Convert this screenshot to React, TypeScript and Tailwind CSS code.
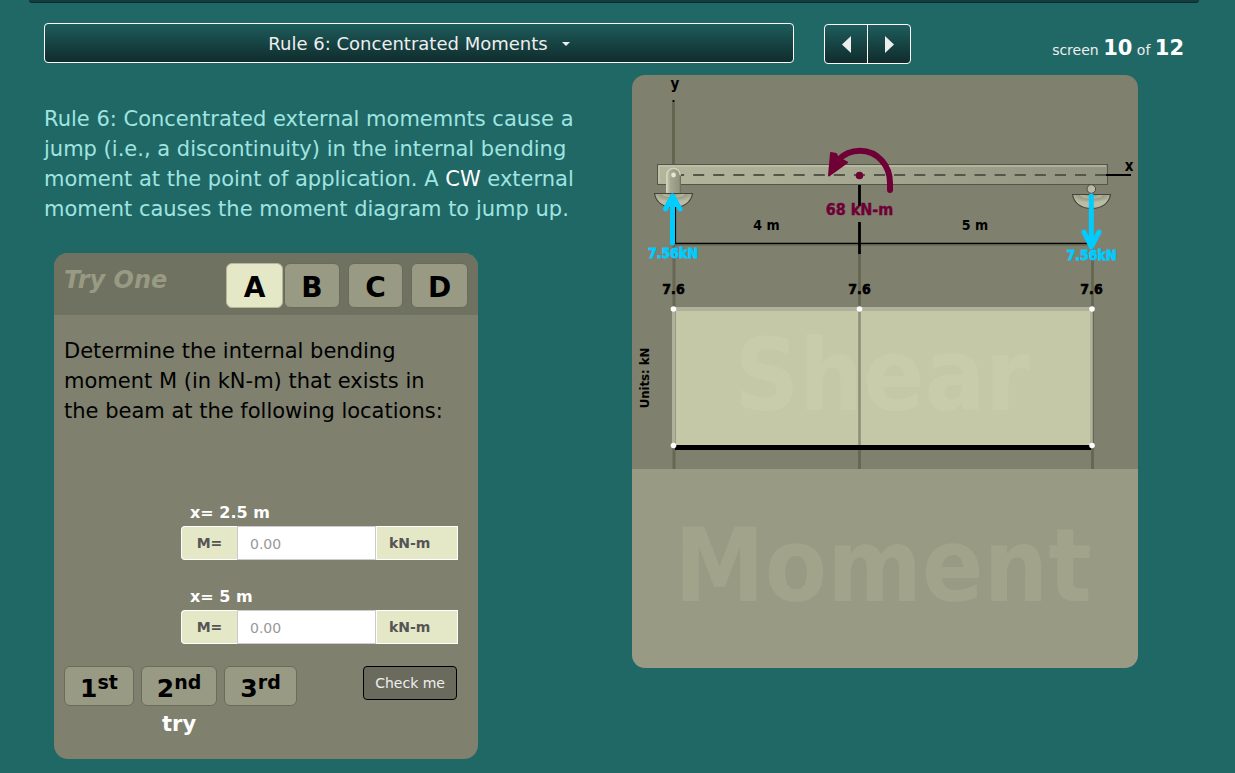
import React from "react";

const tabs = [
  { name: "A", style: "mr-px w-[57px] border-[#b4b79b] bg-[#e4e8c7]" },
  { name: "B", style: "mr-2 w-[56px] border-[#6a6c59] bg-[#989a83]" },
  { name: "C", style: "mr-2 w-[55px] border-[#6a6c59] bg-[#989a83]" },
  { name: "D", style: "w-[57px] border-[#6a6c59] bg-[#989a83]" },
];
const tries = [
  { digit: "1", suffix: "st" },
  { digit: "2", suffix: "nd" },
  { digit: "3", suffix: "rd" },
];
const locations = [
  { id: "m1", label: "x= 2.5 m" },
  { id: "m2", label: "x= 5 m" },
];

function Header() {
  return (
    <header className="flex items-start">
      <button
        type="button"
        aria-haspopup="menu"
        className="flex h-10 flex-1 items-center justify-center gap-[14px] rounded border border-white bg-linear-to-b from-[#1d5d5c] to-[#102c2d] pt-[2px] text-lg text-[#eeeeee]"
      >
        Rule 6: Concentrated Moments
        <svg width="8" height="4" viewBox="0 0 8 4" aria-hidden="true">
          <path d="M0 0h8L4 4z" fill="#eeeeee" />
        </svg>
      </button>
      <div className="ml-[30px] mt-px flex h-10 w-[87px] overflow-hidden rounded border border-white bg-linear-to-b from-[#1d5d5c] to-[#102c2d]">
        <button type="button" aria-label="Previous screen" className="flex flex-1 items-center justify-center border-r border-white">
          <svg width="9" height="17" viewBox="0 0 9 17" aria-hidden="true">
            <path d="M9 0v17L0 8.5z" fill="#eeeeee" />
          </svg>
        </button>
        <button type="button" aria-label="Next screen" className="flex flex-1 items-center justify-center">
          <svg width="9" height="17" viewBox="0 0 9 17" aria-hidden="true">
            <path d="M0 0v17l9-8.5z" fill="#eeeeee" />
          </svg>
        </button>
      </div>
      <p className="mt-[13px] w-[273px] text-right text-sm text-[#eeeeee]">
        screen <b className="text-[21px] leading-6 text-white">10</b> of <b className="text-[21px] leading-6 text-white">12</b>
      </p>
    </header>
  );
}

function TryOne() {
  return (
    <section className="ml-[10px] mt-[29px] w-[424px] overflow-hidden rounded-[14px] bg-[#7f806e] pb-[21px] text-black">
      <div className="flex h-[62px] items-start justify-between bg-[#6f7260] px-[10px] pt-[10px]">
        <h2 className="pt-[2px] text-2xl font-bold italic leading-[30px] text-[#989a83]">Try One</h2>
        <div className="flex">
          {tabs.map((t) => (
            <button key={t.name} type="button" className={"h-[45px] rounded-md border pt-1 text-[28px] leading-none font-bold " + t.style}>
              {t.name}
            </button>
          ))}
        </div>
      </div>
      <p className="pt-[21px] pr-[30px] pl-[10px] text-[21px] leading-[30px]">
        Determine the internal bending moment M (in kN-m) that exists in the beam at the following locations:
      </p>
      <form className="pt-[75px]">
        <div className="ml-[127px] flex w-[277px] flex-col gap-[25px]">
          {locations.map((l) => (
            <div key={l.id}>
              <label htmlFor={l.id} className="block pb-[2px] pl-[9px] text-base leading-[23px] font-bold text-white">
                {l.label}
              </label>
              <div className="flex h-[34px] text-sm font-bold text-[#555555]">
                <span className="flex w-[56px] items-center justify-center rounded-l border border-r-0 border-white bg-[#e4e8c7]">M=</span>
                <input
                  id={l.id}
                  placeholder="0.00"
                  className="w-0 flex-1 border border-[#cccccc] bg-white px-3 pt-[2px] font-normal placeholder:text-[#999999]"
                />
                <span className="flex w-[82px] items-center border border-white bg-[#e4e8c7] pl-[12px]">kN-m</span>
              </div>
            </div>
          ))}
        </div>
        <div className="mt-[22px] flex items-start px-[10px]">
          <div className="flex gap-[7px]">
            {tries.map((t) => (
              <div key={t.digit} className="flex flex-col items-center">
                <button
                  type="button"
                  className="flex h-10 items-center rounded-md border border-[#6a6c59] bg-[#989a83] px-[15px] text-[25px] leading-none font-bold"
                >
                  <span className="pt-1">{t.digit}</span>
                  <span className="pb-2 text-[19px]">{t.suffix}</span>
                </button>
                {t.digit === "2" && <span className="pt-1 text-[21px] leading-[28px] font-bold text-white">try</span>}
              </div>
            ))}
          </div>
          <button type="button" className="mr-[11px] ml-auto h-[34px] rounded border border-black bg-[#6a6b5d] px-[11px] text-sm text-[#eeeeee]">
            Check me
          </button>
        </div>
      </form>
    </section>
  );
}

function Support({ x, y }: { x: number; y: number }) {
  return (
    <g transform={`translate(${x} ${y})`}>
      <path d="M-19 0H19C17.500 9 10 14 0 14S-17.500 9-19 0Z" fill="url(#dome)" stroke="#444539" strokeWidth="1.200" />
    </g>
  );
}

function Diagram() {
  return (
    <svg viewBox="0 0 506 593" className="block w-full" role="img" aria-label="Beam, shear and moment diagrams" fontWeight="bold">
      <defs>
        <linearGradient id="beam" x1="0" x2="1">
          <stop offset="0" stopColor="#b4b69c" />
          <stop offset="1" stopColor="#929482" />
        </linearGradient>
        <radialGradient id="dome" cx="0.5" cy="0" r="0.6">
          <stop offset="0" stopColor="#8f917b" />
          <stop offset="0.45" stopColor="#b4b69c" />
          <stop offset="0.55" stopColor="#999b85" />
          <stop offset="1" stopColor="#babca3" />
        </radialGradient>
        <linearGradient id="bracket" x1="0" x2="1">
          <stop offset="0" stopColor="#d0d2b8" />
          <stop offset="0.3" stopColor="#a6a891" />
          <stop offset="1" stopColor="#8d8f79" />
        </linearGradient>
      </defs>
      <rect width="506" height="394" fill="#7f806e" />
      <rect y="394" width="506" height="199" fill="#989a83" />

      <path d="M42 168V394M227.500 179V394M460.500 168V394" stroke="#666853" strokeWidth="3" />
      <path d="M41.500 25V93" stroke="#63654f" strokeWidth="3" />
      <circle cx="41.500" cy="26" r="1" />

      <rect x="25.500" y="89.500" width="450" height="20" fill="url(#beam)" stroke="#55564a" />
      <path d="M27 108V91H474" fill="none" stroke="#c8cab1" />
      <path d="M41 100H474" stroke="#55564a" strokeWidth="2" strokeDasharray="11.100 9" />
      <path d="M474 100H499" stroke="#000" strokeWidth="2" />

      <Support x={41.5} y={118.500} />
      <Support x={459.500} y={119.500} />
      <path d="M34 118V100a7.500 7.500 0 0 1 15 0V118Z" fill="url(#bracket)" />
      <path d="M34.800 117V100a6.700 6.700 0 0 1 13.400 0" fill="none" stroke="#d2d4bb" strokeWidth="1.400" />
      <path d="M48.400 101V118" stroke="#6f705e" strokeWidth="1.200" />
      <circle cx="41.500" cy="100" r="2.400" fill="#e4e6cf" />
      <circle cx="459.300" cy="114" r="4.300" fill="#b9bba4" stroke="#4a4b40" />

      <path d="M42 168.500H460" stroke="#000" strokeWidth="1.600" />
      <path d="M42 170H460" stroke="#5f614f" strokeWidth="1" />
      <path d="M43.500 132V168" stroke="#000" strokeWidth="1.200" />
      <path d="M227.500 110V131M227.500 147V179" stroke="#000" strokeWidth="2.800" />

      <path d="M206 85C213 78 220 75.800 228 75.800C246 76 258 91 258 108V115" fill="none" stroke="#6f0035" strokeWidth="6" strokeLinecap="round" />
      <path d="M197 100.500L199 78L204 79L206 83L215 87.500L199 99Z" fill="#6f0035" stroke="#6f0035" strokeWidth="2" strokeLinejoin="round" />
      <circle cx="227.500" cy="100.500" r="3.800" fill="#6f0035" />

      <rect x="42" y="233" width="418" height="137" fill="#c5c8a6" />
      <text x="250" y="335" textAnchor="middle" fontSize="100" fill="#c9ccab" className="font-['DejaVu_Sans_Condensed']">Shear</text>
      <rect x="41" y="232" width="419" height="4" fill="#b0b19a" />
      <path d="M41.500 234V370M459.500 234V370" stroke="#b0b19a" strokeWidth="3" />
      <path d="M43.500 236V370" stroke="#989a83" />
      <path d="M461.300 234V370" stroke="#666853" />
      <path d="M227.500 234V370" stroke="#8d8f78" strokeWidth="2.600" />
      <path d="M43 372.500H459" stroke="#000" strokeWidth="5" />
      <g fill="#fff">
        <circle cx="41.500" cy="234" r="2.800" />
        <circle cx="227.500" cy="234" r="2.800" />
        <circle cx="460" cy="234" r="2.800" />
        <circle cx="41.500" cy="370.500" r="2.800" />
        <circle cx="460" cy="370.500" r="2.800" />
      </g>

      <g className="font-['DejaVu_Sans_Condensed']" textAnchor="middle" fontSize="14">
        <text x="43" y="14" fontSize="15">y</text>
        <text x="497" y="96" fontSize="15">x</text>
        <text x="134.500" y="155">4 m</text>
        <text x="343" y="155">5 m</text>
        <g stroke="#000" strokeWidth="0.600">
          <text x="41.500" y="219">7.6</text>
          <text x="227.500" y="219">7.6</text>
          <text x="459.500" y="219">7.6</text>
        </g>
        <text x="227.500" y="140" fontSize="16" fill="#6f0035" stroke="#6f0035" strokeWidth="0.400">68 kN-m</text>
        <text transform="translate(17 303) rotate(-90)" fontSize="13">Units: kN</text>
        <g fill="#00ccff" stroke="#00ccff" strokeWidth="0.800">
          <text x="41" y="183">7.56kN</text>
          <text x="459.500" y="185">7.56kN</text>
        </g>
      </g>
      <g fill="none" stroke="#00ccff" strokeWidth="5" strokeLinecap="round" strokeLinejoin="round">
        <path d="M40.500 168V121M33.500 134L40.500 121L48 134" />
        <path d="M459.300 121V170M452 157L459.300 172L467 157" />
      </g>
      <text x="251" y="526" textAnchor="middle" fontSize="101" fill="#a1a38b" className="font-['DejaVu_Sans_Condensed']">Moment</text>
    </svg>
  );
}

export default function App() {
  return (
    <div className="min-h-screen bg-[#206866] pr-9 pb-[15px] pl-[29px] font-['DejaVu_Sans',sans-serif]">
      <div className="h-[3px] rounded-b border-b border-[#0c2b2c] bg-[#123c3e]" />
      <div className="px-[15px] pt-5">
        <Header />
        <main className="flex items-start">
          <div className="min-w-0 flex-1 pt-10">
            <p className="text-[21px] leading-[30px] text-[#9fe4e0]">
              Rule 6: Concentrated external momemnts cause a jump (i.e., a discontinuity) in the internal bending moment at the point of application. A{" "}
              <span className="text-white">CW</span> external moment causes the moment diagram to jump up.
            </p>
            <TryOne />
          </div>
          <figure className="mt-[11px] mr-[46px] ml-12 w-[506px] overflow-hidden rounded-[13px]">
            <Diagram />
          </figure>
        </main>
      </div>
    </div>
  );
}
